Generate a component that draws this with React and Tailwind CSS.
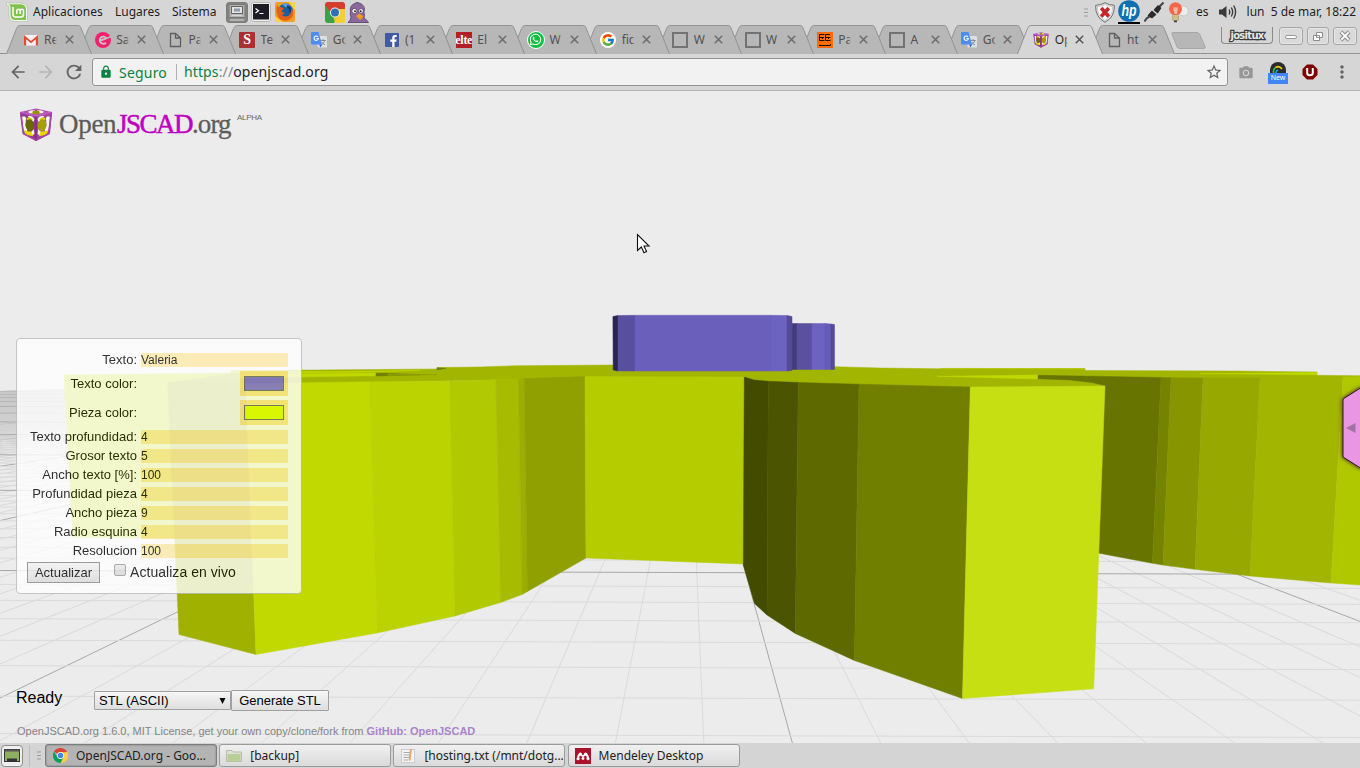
import React from "react";
import { FcGoogle } from "react-icons/fc";
import { FaFacebookF, FaWhatsapp } from "react-icons/fa";
import { MdArrowBack, MdArrowForward, MdRefresh, MdStarBorder, MdLock, MdCameraAlt, MdMoreVert } from "react-icons/md";

/* ---------- icons ---------- */

const Chrome = ({ className }) => (
  <svg viewBox="0 0 20 20" className={className}>
    <path d="M10 10 1.3 5A10 10 0 0 1 18.7 5Z" fill="#db4437" />
    <path d="M10 10 18.7 5A10 10 0 0 1 10 20Z" fill="#ffcd40" />
    <path d="M10 5.5H18.9A10 10 0 0 1 10 20L14 12Z" fill="#ffcd40" />
    <path d="M10 20A10 10 0 0 1 1.3 5L6 12.3 10 14.5 14 12.3Z" fill="#0f9d58" />
    <circle cx="10" cy="10" r="4.6" fill="#fff" />
    <circle cx="10" cy="10" r="3.7" fill="#4285f4" />
  </svg>
);

const Cube = ({ className }) => (
  <svg viewBox="0 0 34 34" className={className}>
    <path d="M1 4 17 8V33L4 26Z" fill="#8f3a8f" />
    <path d="M33 4 17 8V33L31 26Z" fill="#a548a5" />
    <path d="M1 4 17 0.5 33 4 17 8Z" fill="#b44fb4" />
    <path d="M9 3.8Q12 2 16 2.4L14 5.5 10 5Z M25 3.8Q22 2 18 2.4L20 5.5 24 5Z" fill="#f5f5ea" />
    <path d="M14 2.8H20L21 5.5 17 6.6 13 5.5Z" fill="#9a9400" />
    <path d="M3 9Q6 7 7 10L6.5 18 8.5 22 7 25 4.5 22Z" fill="#f7f7ea" />
    <path d="M31 9Q28 7 27 10L27.5 18 25.5 22 27 25 29.5 22Z" fill="#f7f7ea" />
    <path d="M9 8Q13 7 15.5 11L14.5 14 10 11Z M25 8Q21 7 18.5 11L19.5 14 24 11Z" fill="#f7f7ea" />
    <path d="M14.8 21 15.5 26 13 27.5 12 24Z M19.2 21 18.5 26 21 27.5 22 24Z" fill="#f7f7ea" />
    <path d="M5.5 22Q9 24 12.5 23.5L14 28Q8 28 5.5 25Z M28.5 22Q25 24 21.5 23.5L20 28Q26 28 28.5 25Z" fill="#e6dc00" />
    <path d="M7 11Q9 8 12 10L14 12 9 12.5Z M27 11Q25 8 22 10L20 12 25 12.5Z" fill="#d8cf00" />
    <ellipse cx="11" cy="17.3" rx="4.3" ry="6" fill="#6b6800" transform="rotate(-8 11 17.3)" />
    <ellipse cx="23" cy="17.3" rx="4.3" ry="6" fill="#a5a000" transform="rotate(8 23 17.3)" />
    <path d="M17 8V33" stroke="#8a2a8a" strokeWidth="2.2" />
    <path d="M1.5 4.3 17 8 32.5 4.3" stroke="#c05cc0" strokeWidth="1.3" fill="none" />
    <path d="M1.6 4.5 4.3 25.6 17 32.2 29.7 25.6 32.4 4.5" stroke="#a445a4" strokeWidth="1.6" fill="none" />
  </svg>
);

const Gmail = () => (
  <svg viewBox="0 0 16 16" className="size-4">
    <path d="M1 3H15V13.5H1Z" fill="#f3f3f3" />
    <path d="M1 3 8 9 15 3V13.5H12.8V7.3L8 11.2 3.2 7.3V13.5H1Z" fill="#dd4b39" />
  </svg>
);

const PinkE = () => (
  <svg viewBox="0 0 16 16" className="size-4">
    <circle cx="8" cy="8" r="8" fill="#f4206e" />
    <path d="M5 8.8 11.3 6.2A3.6 3.6 0 1 0 11 10.6" fill="none" stroke="#c4c4c4" strokeWidth="1.9" />
    <path d="M11.3 6.2 16 4.6" stroke="#b7b7b7" strokeWidth="1.6" />
  </svg>
);

const Doc = () => (
  <svg viewBox="0 0 16 16" className="size-4">
    <path d="M3.5 1.5H8.5L13.5 6V14.5H3.5ZM8.5 1.5V6H13.5" fill="none" stroke="#5f5f5f" strokeWidth="1.3" />
  </svg>
);

const Translate = () => (
  <svg viewBox="0 0 16 16" className="size-4">
    <rect x="6.5" y="4" width="9.5" height="11.5" rx="1" fill="#dfdfdf" />
    <path d="M9.5 8.5H14.8M12 7V8.5M13.8 8.5Q13 11.5 10.3 13M10.8 10Q12 12 14 13" stroke="#7b8a93" fill="none" strokeWidth="0.9" />
    <path d="M1 0H7.5L11 12.5H1Q0 12.5 0 11.5V1Q0 0 1 0Z" fill="#4d8bf5" />
    <path d="M8 12.5H11L9.6 15.5Z" fill="#3367d6" />
    <path d="M7 4.9A2.2 2.2 0 1 0 7.4 6.5H5.4" fill="none" stroke="#fff" strokeWidth="1.1" />
  </svg>
);

const Square = () => <span className="block size-4 border-2 border-[#737373]" />;

const icons = {
  gmail: <Gmail />,
  e: <PinkE />,
  doc: <Doc />,
  s: <span className="flex size-4 items-center justify-center rounded-[1px] bg-[#a83232] font-['Liberation_Serif',serif] text-[14px] font-bold text-white">S</span>,
  tr: <Translate />,
  fb: (
    <span className="flex size-[14px] items-end justify-end rounded-[1px] bg-[#3f5ba5] pr-px">
      <FaFacebookF className="h-[12px] w-[9px] text-white" />
    </span>
  ),
  el: <span className="flex size-4 items-center justify-center overflow-hidden bg-[#b31f24] font-['Liberation_Serif',serif] text-[12px] font-bold leading-none tracking-tight text-white">elte</span>,
  wa: (
    <span className="flex size-4 items-center justify-center rounded-full bg-[#10bf42] ring-1 ring-white">
      <FaWhatsapp className="size-[13px] text-white" />
    </span>
  ),
  g: (
    <span className="flex size-4 items-center justify-center rounded-full bg-white">
      <FcGoogle className="size-[14px]" />
    </span>
  ),
  sq: <Square />,
  or: (
    <svg viewBox="0 0 16 16" className="size-4">
      <rect width="16" height="16" fill="#ff6d00" />
      <path d="M2.5 2.5H7.5M2.5 2.5V8.5H7.5M8.5 2.5H13M8.5 2.5V8.5H13.5M2.5 5.5H7M8.5 5.5H13.5M5.5 5.5V7M11.5 5.5V7M2 13.5H13.5V12" fill="none" stroke="#1a1000" strokeWidth="1" />
    </svg>
  ),
  cube: <Cube className="size-4" />,
};

/* ---------- desktop top bar ---------- */

function TopBar() {
  return (
    <div className="flex h-6 shrink-0 items-center bg-[#d6d6d6] text-[12px] text-[#1e1e1e]">
      <svg viewBox="0 0 22 20" className="ml-[6px] h-5 w-[22px]">
        <path d="M0.5 1H15Q21.5 1 21.5 8V19.5H9Q3 19.5 3 13V5Q3 3.5 0.5 3Z" fill="#f6f9f1" stroke="#a9b99a" strokeWidth="0.6" />
        <path d="M2 2.3H15Q20 2.5 20 8V18H9.5Q4.5 18 4.5 13V5Q4.5 3 2 2.3Z" fill="#82c14d" />
        <path d="M7 5V12.5Q7 15 9.5 15H15Q17.5 15 17.5 12.5V9.3Q17.5 7.3 15.8 7.3 14.2 7.3 14.2 9V12M14.2 9Q14.2 7.3 12.4 7.3 10.8 7.3 10.8 9V12" stroke="#fff" strokeWidth="1.5" fill="none" />
      </svg>
      <span className="ml-[5px] w-[70px] whitespace-nowrap">Aplicaciones</span>
      <span className="ml-3 w-[45px] whitespace-nowrap">Lugares</span>
      <span className="ml-3 w-[46px] whitespace-nowrap">Sistema</span>
      <svg viewBox="0 0 22 21" className="ml-[8px] h-[21px] w-[22px]">
        <rect x="0.7" y="0.7" width="20.6" height="19.6" rx="2" fill="#8a8a86" stroke="#6b6b68" />
        <rect x="3" y="2.5" width="16" height="13" fill="#b4b4b4" stroke="#777" />
        <rect x="5.5" y="4.5" width="11" height="7" fill="#e2e2e2" stroke="#666" />
        <rect x="8" y="6.5" width="6" height="3" fill="#8d9bab" />
        <path d="M6 13.5H16M4 18H18" stroke="#d8d8d8" strokeWidth="1.2" />
      </svg>
      <svg viewBox="0 0 20 20" className="ml-[3px] h-5 w-5">
        <rect x="0.5" y="0.5" width="19" height="19" rx="2" fill="#eee" stroke="#b5b5b5" />
        <rect x="2" y="2" width="16" height="15.5" fill="#1d1b24" />
        <path d="M4.5 6.5 7.5 8.7 4.5 11M8.5 11.5H12.5" stroke="#fff" fill="none" strokeWidth="1.2" />
      </svg>
      <svg viewBox="0 0 20 20" className="ml-[4px] h-5 w-5">
        <rect width="20" height="20" rx="2" fill="#f0a01e" />
        <path d="M14 0H18Q20 0 20 2V8L16 4Z M0 14 5 18 8 20H2Q0 20 0 18Z" fill="#fbd34a" />
        <circle cx="10.5" cy="9" r="7.5" fill="#1a5f9e" />
        <path d="M7 2Q12 0 15 4 13 6 10 5Z" fill="#4fa5dc" />
        <path d="M2 3Q3 6 5 5 8 5 9 7 6 8 7 10L10 11Q9 13 6.5 12.5 9 16 14 13.5 17 11 16 6 20 11 17 15.5 12 20.5 5.5 17.5 0 13 2 3Z" fill="#e4601a" />
        <path d="M12 4Q16 6 15 10" fill="none" stroke="#153a6b" strokeWidth="2" />
      </svg>
      <span className="ml-[30px] flex h-[21px] w-5 items-center justify-center overflow-hidden rounded-[3px] bg-[#e7c52c]">
        <svg viewBox="0 0 20 21" className="h-[21px] w-5">
          <path d="M0 0H20V7H10L5 14 0 4Z" fill="#d33e2f" />
          <path d="M0 3 8 14 10 21H0Z" fill="#3aa24c" />
          <path d="M10 7H20V21H9L14 13Z" fill="#f6cf38" />
          <circle cx="10" cy="10.5" r="5" fill="#f1f1f1" />
          <circle cx="10" cy="10.5" r="4" fill="#2f6fb5" />
        </svg>
      </span>
      <svg viewBox="0 0 22 21" className="ml-[2px] h-[21px] w-[22px]">
        <path d="M1 20.5Q4 18 4 15 2.5 13 3.5 10 2 3 9 1L10 0 12 1Q19 3 17 10.5 18 13 17 16 20 18 21.5 20.5Z" fill="#8a6a9c" stroke="#553a66" strokeWidth="0.8" />
        <circle cx="7.5" cy="9" r="2.6" fill="#fff" stroke="#553a66" strokeWidth="0.8" />
        <circle cx="14" cy="9" r="2.4" fill="#fff" stroke="#553a66" strokeWidth="0.8" />
        <circle cx="8" cy="9.3" r="1" fill="#222" />
        <circle cx="13.7" cy="9.3" r="1" fill="#222" />
        <path d="M9 14 12.5 11.5 16.5 14.5 13 18Z" fill="#f39b1d" />
      </svg>
      <div className="flex-1" />
      <svg viewBox="0 0 4 9" className="mr-[7px] h-[9px] w-1">
        <path d="M0 1H4M0 4.5H4M0 8H4" stroke="#9b9b9b" />
      </svg>
      <svg viewBox="0 0 20 21" className="h-[21px] w-5">
        <path d="M10 0.7Q14 3 19.3 3.3 20 15 10 20.3 0 15 0.7 3.3 6 3 10 0.7Z" fill="#e9e9e9" stroke="#6d6d6d" />
        <path d="M10 2.5Q14 4.5 17.5 4.7 18 14 10 18.5 2 14 2.5 4.7 6 4.5 10 2.5Z" fill="#fafafa" stroke="#aaa" strokeWidth="0.6" />
        <path d="M6.2 6 13.8 14.5M13.8 6 6.2 14.5" stroke="#c5262a" strokeWidth="3.6" />
      </svg>
      <span className="ml-[3px] flex h-6 w-[22px] flex-col items-center border-b-2 border-black">
        <svg viewBox="0 0 22 22" className="h-[22px] w-[22px]">
          <circle cx="11" cy="11" r="10.8" fill="#0f6fb0" />
          <text x="3.5" y="16" fontSize="17" fontStyle="italic" fontWeight="bold" fill="#fff" fontFamily="Liberation Sans" textLength="15" lengthAdjust="spacingAndGlyphs">hp</text>
        </svg>
      </span>
      <svg viewBox="0 0 20 20" className="ml-[4px] h-5 w-5">
        <path d="M0.5 19.5Q2 16 5.5 14.5M14.5 5.5 19.5 0.5" fill="none" stroke="#444" strokeWidth="2" />
        <path d="M4.5 13.5 8 9.5 11.5 12.5 8 15.5Z" fill="#2b2b2b" stroke="#2b2b2b" strokeWidth="1.5" strokeLinejoin="round" />
        <path d="M10.5 8 14 4 16.5 6 13.5 10.5Z" fill="#2b2b2b" stroke="#2b2b2b" strokeWidth="1.5" strokeLinejoin="round" />
      </svg>
      <svg viewBox="0 0 21 21" className="ml-[4px] h-[21px] w-[21px]">
        <circle cx="15.5" cy="9" r="5" fill="#ececec" stroke="#bbb" strokeWidth="0.7" />
        <circle cx="7.5" cy="6.8" r="6.5" fill="#f4664a" />
        <path d="M5 5.5H10L9 12H6.5Z" fill="#ffb9a0" />
        <rect x="4.5" y="13" width="6" height="5.5" rx="1" fill="#e2d8a4" stroke="#a08f58" strokeWidth="0.6" />
        <path d="M5 15H10.4M5 17H10.4" stroke="#a08f58" strokeWidth="0.7" />
        <rect x="6" y="18.5" width="3" height="1.8" fill="#444" />
      </svg>
      <span className="ml-[7px] w-[13px]">es</span>
      <svg viewBox="0 0 20 16" className="ml-[9px] h-4 w-5">
        <path d="M1 5.5H4L8.5 2V14L4 10.5H1Z" fill="#3b3b3b" />
        <path d="M11 5.5Q12.5 8 11 10.5M13.3 3.5Q16 8 13.3 12.5M15.7 1.5Q19.5 8 15.7 14.5" fill="none" stroke="#3b3b3b" strokeWidth="1.4" />
      </svg>
      <span className="ml-[8px] mr-1 w-[110px] whitespace-pre text-right">lun  5 de mar, 18:22</span>
    </div>
  );
}

/* ---------- browser tabs ---------- */

const tabs = [
  ["gmail", "Re"], ["e", "Sa"], ["doc", "Pa"], ["s", "Te"], ["tr", "Go"], ["fb", "(1"],
  ["el", "El"], ["wa", "W"], ["g", "fic"], ["sq", "W"], ["sq", "W"], ["or", "Pa"],
  ["sq", "A"], ["tr", "Go"], ["cube", "Op", true], ["doc", "ht"],
];

function Tab({ icon, title, active, order }) {
  return (
    <div className="relative -mr-[13.8px] flex h-[29px] w-[86px] shrink-0 items-center" style={{ zIndex: active ? 40 : 30 - order }}>
      <svg viewBox="0 0 86 29" className="absolute inset-0 h-[29px] w-[86px]">
        <path
          d="M0.5 29 10.5 3.5Q12 0.5 13.5 0.5H72.5Q74 0.5 75 3L85.5 29Z"
          fill={active ? "#d6d6d6" : "#b7b7b7"}
        />
        <path d="M0.5 29 10.5 3.5Q12 0.5 13.5 0.5H72.5Q74 0.5 75 3L85.5 29" fill="none" stroke="#939393" />
      </svg>
      <span className="relative ml-[16.5px] flex size-4 shrink-0 items-center justify-center">{icons[icon]}</span>
      <span className={`relative ml-[5.5px] w-[13px] overflow-hidden whitespace-nowrap text-[12px] ${active ? "text-[#2b2b2b]" : "text-[#505050]"}`}>
        {title}
        <span className={`absolute inset-y-0 right-0 w-[3px] bg-gradient-to-r from-transparent ${active ? "to-[#d6d6d6]" : "to-[#b7b7b7]"}`} />
      </span>
      <svg viewBox="0 0 9 9" className="relative ml-[7.5px] size-[9px]">
        <path d="M0.8 0.8 8.2 8.2M8.2 0.8 0.8 8.2" stroke={active ? "#555" : "#6c6c6c"} strokeWidth="1.5" />
      </svg>
    </div>
  );
}

const WinButton = ({ className, children }) => (
  <span className={`flex h-[18px] items-center justify-center rounded-[3px] border border-[#a6a6a6] bg-[#dadada] shadow-[inset_0_0_0_1px_#e6e6e6] ${className}`}>{children}</span>
);

function TabStrip() {
  return (
    <div className="flex h-[30px] shrink-0 items-start border-b border-[#939393] bg-[#d6d6d6] pl-[6px] pt-px">
      <div className="isolate -mb-px flex h-[30px]">
        {tabs.map(([icon, title, active], i) => (
          <Tab key={i} icon={icon} title={title} active={active} order={i} />
        ))}
      </div>
      <svg viewBox="0 0 36 18" className="ml-[10px] mt-[7px] h-[18px] w-9">
        <path d="M2 0.5H26Q27.5 0.5 28.5 2L34 14.5Q34.5 16.5 33 16.5H9Q7 16.5 6 15L1 2Q0.5 0.5 2 0.5Z" fill="#b7b7b7" stroke="#a6a6a6" />
      </svg>
      <div className="ml-auto mr-[3px] mt-[2px] flex items-start gap-[4px]">
        <span className="mr-[2px] flex h-[17px] w-[52px] items-center justify-center rounded-b-[4px] border border-t-0 border-[#8b8b8b] font-['DejaVu_Sans',sans-serif] text-[10px] font-bold tracking-[-0.7px] text-[#e9e9e9] [-webkit-text-stroke:2.5px_#3c3c3c] [paint-order:stroke_fill]">jositux</span>
        <WinButton className="w-6">
          <span className="mt-[2px] h-[4px] w-3 rounded-sm border border-[#999] bg-white" />
        </WinButton>
        <WinButton className="w-[22px]">
          <svg viewBox="0 0 12 11" className="h-[11px] w-3">
            <path d="M4.5 1.5H10.5V6.5H4.5ZM1.5 4.5H7.5V9.5H1.5Z" fill="#fff" stroke="#8c8c8c" />
          </svg>
        </WinButton>
        <WinButton className="w-6">
          <svg viewBox="0 0 12 12" className="size-3">
            <path d="M2 2 10 10M10 2 2 10" stroke="#8f8f8f" strokeWidth="4" />
            <path d="M2.4 2.4 9.6 9.6M9.6 2.4 2.4 9.6" stroke="#fff" strokeWidth="2" />
          </svg>
        </WinButton>
      </div>
    </div>
  );
}

function Toolbar() {
  return (
    <div className="flex h-[37px] shrink-0 items-center border-b border-[#b3b3b3] bg-[#d6d6d6] text-[14px]">
      <MdArrowBack className="ml-[8px] size-5 text-[#636363]" />
      <MdArrowForward className="ml-[8px] size-5 text-[#b5b5b5]" />
      <MdRefresh className="ml-[7px] size-[22px] text-[#636363]" />
      <div className="ml-[7px] flex h-7 w-[1136px] items-center rounded-[3px] border border-[#949494] bg-[#f2f2f2]">
        <MdLock className="ml-[6px] size-[14px] text-[#0b8043]" />
        <span className="ml-[6px] w-[49px] whitespace-nowrap tracking-[0.2px] text-[#0b8043]">Seguro</span>
        <span className="ml-[8px] h-4 w-px bg-[#b0b0b0]" />
        <span className="-mt-px ml-[7px] whitespace-nowrap tracking-[0.12px] text-[#222]">
          <span className="text-[#0b8043]">https</span>
          <span className="text-[#888]">://</span>openjscad.org
        </span>
        <MdStarBorder className="ml-auto mr-[4px] size-[18px] text-[#636363]" />
      </div>
      <MdCameraAlt className="ml-[10px] mt-px size-4 text-[#969696]" />
      <div className="ml-[14px] mt-px flex w-5 flex-col items-center">
        <svg viewBox="0 0 16 11" className="h-[11px] w-4">
          <path d="M0 11V8A8 8 0 0 1 16 8V11Z" fill="#2c2c2c" />
          <path d="M3.8 11A4.6 4.6 0 0 1 5.5 5.6" stroke="#22c55e" strokeWidth="1.6" fill="none" />
          <path d="M5.5 5.6Q9 3 12 7" stroke="#e8d51a" strokeWidth="1.6" fill="none" />
          <path d="M6 11A3 3 0 0 1 8 8" stroke="#18a4d8" strokeWidth="1.6" fill="none" />
        </svg>
        <span className="flex h-[11px] w-5 items-center justify-center bg-[#4285f4] text-[7px] text-white">New</span>
      </div>
      <svg viewBox="0 0 16 16" className="ml-[14px] size-4">
        <path d="M5 0.5H11L15.5 5V11L11 15.5H5L0.5 11V5Z" fill="#800000" />
        <path d="M5.2 4V9Q5.2 11.3 8 11.3 10.8 11.3 10.8 9V4" fill="none" stroke="#fff" strokeWidth="2" />
      </svg>
      <MdMoreVert className="ml-[14px] size-5 text-[#636363]" />
    </div>
  );
}

/* ---------- 3D scene ---------- */

const VX = 688.3;
const VY = 364;
const radial = Array.from({ length: 140 }, (_, i) => i - 70);
const flat = Array.from({ length: 118 }, (_, i) => i - 8);
const isMajor = (n) => ((n % 10) + 10) % 10 === 0;

function Grid() {
  return (
    <g clipPath="url(#ground)">
      {radial.map((n) => {
        const k = 0.041 + 0.2335 * n;
        const major = isMajor(n - 1);
        return <line key={`r${n}`} x1={VX + k * 26} y1={VY + 26} x2={VX + k * 380} y2={744} stroke={major ? "#a8a8a8" : "#dadada"} />;
      })}
      {flat.map((n) => {
        const y = VY + 1000 / (4.81 + 0.302 * n);
        return <line key={`f${n}`} x1="0" y1={y - 1.4} x2="1360" y2={y + 2.6} stroke={isMajor(n) ? "#a8a8a8" : "#dadada"} />;
      })}
      <rect x="0" y="388" width="1360" height="75" fill="url(#haze)" />
    </g>
  );
}

const faces = [
  ["#c1d900", "64,375 231,373 302,372 302,540 73,537"],
  ["#a2b500", "231,370.7 437,369 437,367.6 480,367 515,365.8 613,365 835,366.7 880,368 940,368.8 1085,368.8 1085,370.5 1235,371 1317,372 1317,375.3 1360,375.8 1360,380 1110,388 970,388 744,385 585,378 300,384 168,383 231,374"],
  ["#c1d900", "231,371 330,371.6 420,370.4 350,372.6 231,373"],
  ["#c1d900", "240,374.3 376,373 376,375.7 300,377 240,377.5"],
  ["#6f7d00", "376,373.3 384,373.3 420,374.8 376,376"],
  ["#8e9e00", "388,374 437,374.6 388,375.6"],
  ["#6f7d00", "437,367.8 446,368.2 437,370"],
  ["#b0c600", "940,368.4 1085,368.6 1085,369.2 940,369"],
  ["#c1d900", "1200,373.6 1317,372.6 1317,374.8"],
  ["#c1d900", "937,376.3 1038,375 1038,379"],
  ["#677500", "1038,375.3 1161,377.5 1152.5,563.3 1098,553 1095,390 1105,385.5 1092,382.5 1070,380 1038,378.7"],
  ["#758400", "1161,377.5 1171,377.7 1163,565 1152.5,563.3"],
  ["#869500", "1171,377.7 1203,378 1195,569.3 1163,565"],
  ["#97a800", "1203,378 1260,378.2 1250,576 1195,569.3"],
  ["#a2b500", "1260,377 1343,377.2 1331,583 1250,576"],
  ["#b0c800", "1343,377 1360,376.5 1360,585 1331,583"],
  ["#a0b100", "167.7,382.5 245.7,380 256,654.5 179,634.5"],
  ["#c1d900", "245.7,384 302,382.8 369.5,381.8 377,633 256,654.5"],
  ["#bbd300", "369.5,381.8 449.7,381 455,616 377,633"],
  ["#b1c900", "449.7,381 496,379.8 500.5,602.5 455,616"],
  ["#a7bb00", "496,379.8 518.5,379 522,594.5 500.5,602.5"],
  ["#9cae00", "518.5,379 524.3,378.6 527.4,591.5 522,594.5"],
  ["#90a000", "524.3,378.6 585,376.6 586,558 527.4,591.5"],
  ["#b5cd00", "585,376.6 744.5,377 743.5,564 586,558"],
  ["#434b00", "744.3,377 754,380 768.3,381.3 767,615 754.5,603.5 743.3,565"],
  ["#4b5400", "768.3,381.3 798.3,382.5 795.3,633.5 767,615"],
  ["#5e6a00", "798.3,382.5 859,384.2 854.5,660.5 795.3,633.5"],
  ["#717f00", "859,384.2 970.3,387 962.5,698.5 854.5,660.5"],
  ["#c5df12", "970.3,387 1105,386 1093.7,688.8 962.5,698.5"],
  ["#433c7c", "792,323.5 797,323.5 797,369.5 792,369.5"],
  ["#5a509f", "797,323.5 812,323.5 812,369.5 797,369.5"],
  ["#6c62c0", "812,323.5 825,323.5 825,369.5 812,369.5"],
  ["#665bb5", "825,323.5 831,324 831,369.5 825,369.5"],
  ["#544a98", "831,324 834.5,324.5 834.5,369.5 831,369.5"],
  ["#2a2450", "612.9,316.5 618,315.5 618,371 613.2,370"],
  ["#594fa0", "618,315.5 635,315.3 635,371 618,371"],
  ["#6a5fba", "635,315.3 771,315.3 771,371 635,371"],
  ["#6c62c0", "771,315.3 787,315.5 787,371 771,371"],
  ["#544a98", "787,315.5 792,316.5 792,370.5 787,371"],
];

function Scene() {
  return (
    <svg viewBox="0 91 1360 652" className="absolute inset-0 h-[652px] w-[1360px]">
      <defs>
        <clipPath id="ground">
          <path d="M0 391 65 389 300 388 1360 388V744H0Z" />
        </clipPath>
        <linearGradient id="haze" x1="0" y1="0" x2="0" y2="1">
          <stop offset="0" stopColor="#999" stopOpacity="0.3" />
          <stop offset="1" stopColor="#999" stopOpacity="0" />
        </linearGradient>
        <filter id="glow" x="-50%" y="-20%" width="200%" height="140%">
          <feDropShadow dx="0" dy="0" stdDeviation="2" floodColor="#400040" />
        </filter>
      </defs>
      <Grid />
      {faces.map(([fill, points], i) => (
        <polygon key={i} fill={fill} stroke={fill} strokeWidth="0.5" points={points} />
      ))}
      <polygon points="1343,399 1362,387 1362,469 1343,457" fill="#e996e3" stroke="#222" filter="url(#glow)" />
      <polygon points="1346,428 1355.5,423 1355.5,433" fill="#a472a2" />
      <path d="M637.5 234.5V250.5L641.3 247 644 252.8 646.6 251.6 644 246H649Z" fill="#fff" stroke="#111" strokeWidth="1.1" />
    </svg>
  );
}

/* ---------- parameters form ---------- */

const numeric = [
  ["Texto profundidad:", "4"], ["Grosor texto", "5"], ["Ancho texto [%]:", "100"], ["Profundidad pieza", "4"],
  ["Ancho pieza", "9"], ["Radio esquina", "4"], ["Resolucion", "100"],
];

const TextRow = ({ label, value }) => (
  <div className="flex h-[14px] items-center">
    <span className="w-[120px] whitespace-nowrap text-right text-[13px] leading-[14px]">{label}</span>
    <span className="ml-1 h-[14px] w-[147px] bg-[#ffe696]/80 text-[12px] leading-[14px]">{value}</span>
  </div>
);

const ColorRow = ({ label, swatch }) => (
  <div className="flex h-[25px] items-center">
    <span className="w-[120px] text-right text-[13px]">{label}</span>
    <span className="ml-auto mr-[13px] flex h-[25px] w-12 items-center justify-center bg-[#ffe696]">
      <span className={`h-[15px] w-10 border border-[#666] ${swatch}`} />
    </span>
  </div>
);

function Params() {
  return (
    <div className="absolute left-4 top-[247px] flex h-[256px] w-[286px] flex-col rounded-[4px] border border-[#bbb] bg-white pt-[14px] text-black opacity-80">
      <TextRow label="Texto:" value="Valeria" />
      <div className="mb-[5px] mt-[4px] flex flex-col gap-1">
        <ColorRow label="Texto color:" swatch="bg-[#7a6ae0]" />
        <ColorRow label="Pieza color:" swatch="bg-[#e0ff00]" />
      </div>
      <div className="flex flex-col gap-[5px]">
        {numeric.map(([label, value]) => (
          <TextRow key={label} label={label} value={value} />
        ))}
      </div>
      <div className="ml-[10px] mt-[4px] flex h-[21px] items-center">
        <button className="h-[21px] w-[73px] border border-[#888] bg-gradient-to-b from-[#f6f6f6] to-[#dcdcdc] text-[13px] leading-none">Actualizar</button>
        <span className="mb-[5px] ml-[14px] size-3 rounded-[2px] border border-[#999] bg-gradient-to-b from-[#eee] to-[#d8d8d8]" />
        <span className="ml-[4px] whitespace-nowrap text-[14px] tracking-[0.05px]">Actualiza en vivo</span>
      </div>
    </div>
  );
}

function Viewer() {
  return (
    <main className="relative flex h-[652px] shrink-0 flex-col overflow-hidden bg-[#ececec] font-['Liberation_Sans',Arial,sans-serif]">
      <Scene />
      <div className="relative ml-[19px] mt-[17px] flex items-start">
        <Cube className="size-[34px]" />
        <span className="ml-[6px] mt-px flex w-[178px] whitespace-nowrap font-['Liberation_Serif',serif] text-[27px] leading-[30px] text-[#5c5c5c]">
          <span className="w-[58px] tracking-[-0.3px] [-webkit-text-stroke:0.3px_#5c5c5c]">Open</span>
          <span className="w-[75px] tracking-[-1.5px] text-[#c000c0] [-webkit-text-stroke:0.5px_#c000c0]">JSCAD</span>
          <span className="tracking-[-0.9px] [-webkit-text-stroke:0.3px_#5c5c5c]">.org</span>
        </span>
        <span className="mt-[4px] text-[8px] leading-[12px] tracking-[-0.3px] text-[#666]">ALPHA</span>
      </div>
      <Params />
      <div className="relative mt-auto flex items-center text-black">
        <span className="mb-[5px] ml-4 w-[78px] text-[16px]">Ready</span>
        <div className="flex h-[19px] w-[137px] items-center justify-between rounded-[1px] border border-[#a0a0a0] bg-gradient-to-b from-[#f6f6f6] to-[#dedede] pl-1 pr-[4px] text-[13px]">
          <span>STL (ASCII)</span>
          <svg viewBox="0 0 8 7" className="h-[6px] w-[7px]">
            <path d="M0.5 0H7.5L4 7Z" fill="#000" />
          </svg>
        </div>
        <button className="h-[21px] w-[98px] rounded-[1px] border border-[#a0a0a0] bg-gradient-to-b from-[#f6f6f6] to-[#dedede] text-[13px] leading-none">Generate STL</button>
      </div>
      <p className="relative mb-[4px] ml-[17px] mt-[8px] whitespace-nowrap text-[11px] leading-[16px] text-[#858585]">
        OpenJSCAD.org 1.6.0, MIT License, get your own copy/clone/fork from <b className="text-[#a983cc]">GitHub: OpenJSCAD</b>
      </p>
    </main>
  );
}

/* ---------- taskbar ---------- */

const Task = ({ active, icon, children }) => (
  <div className={`flex h-[23px] w-[172px] items-center rounded-[3px] border pl-[6px] text-[12px] text-[#222] ${active ? "border-[#7c7c7c] bg-[#b4b4b4] shadow-[inset_0_0_2px_#777]" : "border-[#9b9b9b] bg-gradient-to-b from-[#f0f0f0] to-[#dadada]"}`}>
    <span className="flex size-4 items-center justify-center">{icon}</span>
    <span className="ml-[8px] whitespace-nowrap">{children}</span>
  </div>
);

function Taskbar() {
  return (
    <div className="flex h-[25px] shrink-0 items-center bg-[#d4d4d4] pl-px">
      <span className="flex size-[22px] items-center justify-center rounded-[4px] border border-[#8e8e8e] bg-[#efefef]">
        <svg viewBox="0 0 16 13" className="h-[13px] w-4">
          <rect x="0.5" y="0.5" width="15" height="12" fill="#8cb060" stroke="#333" />
          <rect x="0.5" y="0.5" width="15" height="2" fill="#555" />
          <rect x="3" y="9.5" width="10" height="3" fill="#333" />
        </svg>
      </span>
      <span className="ml-[6px] h-[22px] w-px bg-[#bcbcbc]" />
      <svg viewBox="0 0 4 9" className="ml-[7px] h-[9px] w-1">
        <path d="M0 1H4M0 4.5H4M0 8H4" stroke="#9b9b9b" />
      </svg>
      <div className="ml-[4px] flex gap-[2.2px]">
        <Task active icon={<Chrome className="size-[15px]" />}>OpenJSCAD.org - Goo...</Task>
        <Task
          icon={
            <svg viewBox="0 0 16 16" className="size-4">
              <path d="M0.5 2.5H6L7.5 4H15.5V13.5H0.5Z" fill="#dedfd4" stroke="#b9bbae" />
              <rect x="1.5" y="6" width="13" height="7.5" fill="#b9cf98" />
            </svg>
          }
        >
          [backup]
        </Task>
        <Task
          icon={
            <svg viewBox="0 0 16 16" className="size-4">
              <rect x="1.5" y="1.5" width="13" height="13" fill="#f4f4f4" stroke="#ccc" />
              <path d="M3.5 4.5H10M3.5 7H10M3.5 9.5H9M3.5 12H8" stroke="#aaa" />
              <path d="M11 1 9.5 12.5" stroke="#e4a86b" strokeWidth="2" />
            </svg>
          }
        >
          [hosting.txt (/mnt/dotg...
        </Task>
        <Task
          icon={
            <svg viewBox="0 0 16 16" className="size-4">
              <rect width="16" height="16" fill="#a9122a" />
              <path d="M3.2 10.5Q3 7 5.5 6 7 8 8 8 9 8 10.5 6 13 7 12.8 10.5" fill="none" stroke="#fff" strokeWidth="2" />
              <circle cx="5.3" cy="6" r="1.5" fill="#fff" />
              <circle cx="10.7" cy="6" r="1.5" fill="#fff" />
              <circle cx="8" cy="10.5" r="1.4" fill="#fff" />
              <circle cx="3" cy="10.8" r="1.5" fill="#fff" />
              <circle cx="13" cy="10.8" r="1.5" fill="#fff" />
            </svg>
          }
        >
          Mendeley Desktop
        </Task>
      </div>
    </div>
  );
}

export default function App() {
  return (
    <div className="flex h-[768px] w-[1360px] flex-col overflow-hidden bg-[#d6d6d6] font-['Noto_Sans',sans-serif]">
      <TopBar />
      <TabStrip />
      <Toolbar />
      <Viewer />
      <Taskbar />
    </div>
  );
}
